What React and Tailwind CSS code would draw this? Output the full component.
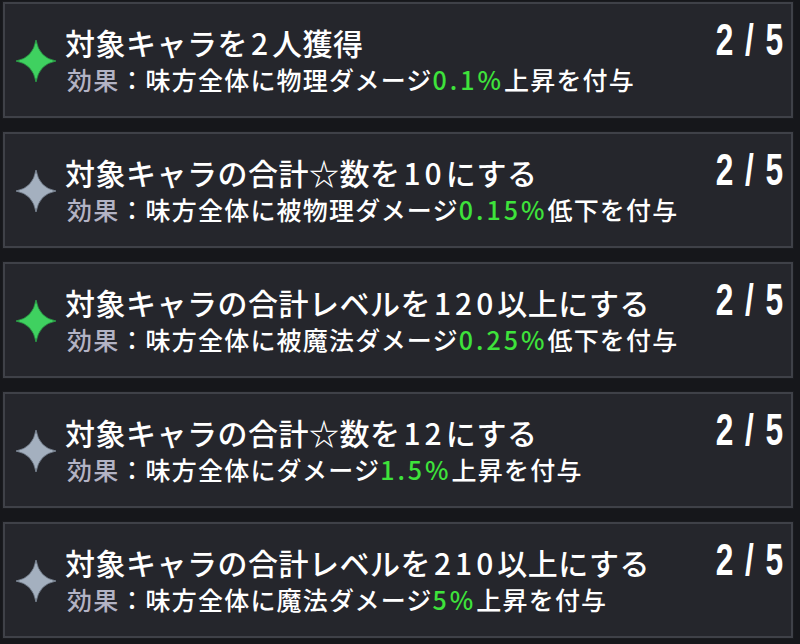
import React from 'react'

const JP = "font-['Noto_Sans_CJK_JP','Noto_Sans',sans-serif]"

// each mission: title segments, effect segments, green star or not
const missions = [
  {
    green: true,
    title: [['対象キャラを'], ['2', 'num'], ['人獲得']],
    effect: [['味方全体に物理ダメージ'], ['0.1%', 'pct'], ['上昇を付与']],
  },
  {
    green: false,
    title: [['対象キャラの合計☆数を'], ['10', 'num'], ['にする']],
    effect: [['味方全体に被物理ダメージ'], ['0.15%', 'pct'], ['低下を付与']],
  },
  {
    green: true,
    title: [['対象キャラの合計レベルを'], ['120', 'num'], ['以上にする']],
    effect: [['味方全体に被魔法ダメージ'], ['0.25%', 'pct'], ['低下を付与']],
  },
  {
    green: false,
    title: [['対象キャラの合計☆数を'], ['12', 'num'], ['にする']],
    effect: [['味方全体にダメージ'], ['1.5%', 'pct'], ['上昇を付与']],
  },
  {
    green: false,
    title: [['対象キャラの合計レベルを'], ['210', 'num'], ['以上にする']],
    effect: [['味方全体に魔法ダメージ'], ['5%', 'pct'], ['上昇を付与']],
  },
]

function Star({ green }) {
  return (
    <svg width="42" height="44" viewBox="0 0 42 44">
      <path
        d="M21 1 Q24 19 41 22 Q24 25 21 43 Q18 25 1 22 Q18 19 21 1Z"
        fill={green ? '#3fd160' : '#a4b0bf'}
        stroke={green ? '#2aa548' : '#7f8a99'}
        strokeWidth="0.8"
      />
    </svg>
  )
}

function Segments({ parts }) {
  return parts.map(([text, kind], i) => {
    if (kind === 'num') {
      return (
        <span key={i} className="tracking-[4px] pl-[3px]">
          {text}
        </span>
      )
    }
    if (kind === 'pct') {
      return (
        <span key={i} className="text-[#3ee33b] tracking-[3px]">
          {text}
        </span>
      )
    }
    return <span key={i}>{text}</span>
  })
}

function MissionCard({ mission }) {
  return (
    <div className="h-[116px] flex items-center bg-[#25262c] border-2 border-[#3f4148] shadow-[0_0_0_1px_#1a1b1f]">
      <div className="w-[60px] shrink-0 flex justify-center items-center pt-[2px] pl-[2px]">
        <Star green={mission.green} />
      </div>
      <div className={`flex-1 min-w-0 flex flex-col ${JP} text-white`}>
        <div className="text-[30px] leading-[34px] font-medium tracking-[0.5px] mt-[-2px] whitespace-nowrap">
          <Segments parts={mission.title} />
        </div>
        <div className="text-[25px] leading-[30px] font-medium tracking-[1.2px] mt-[5px] pl-[2px] whitespace-nowrap">
          <span className="text-[#b3b3c4]">効果</span>
          <span>：</span>
          <Segments parts={mission.effect} />
        </div>
      </div>
      <div className="self-start shrink-0 w-[80px] flex justify-end pt-[14px] pr-[6px]">
        <div className="text-white font-['Liberation_Sans',sans-serif] font-bold text-[44px] leading-[44px] tracking-[2px] scale-x-[0.72] origin-right whitespace-nowrap">
          2 / 5
        </div>
      </div>
    </div>
  )
}

export default function App() {
  return (
    <div className="w-[800px] h-[644px] bg-[#16171b] pl-[3px] pr-[7px] pt-[2px] flex flex-col gap-[14px] overflow-hidden">
      {missions.map((m, i) => (
        <MissionCard key={i} mission={m} />
      ))}
    </div>
  )
}
